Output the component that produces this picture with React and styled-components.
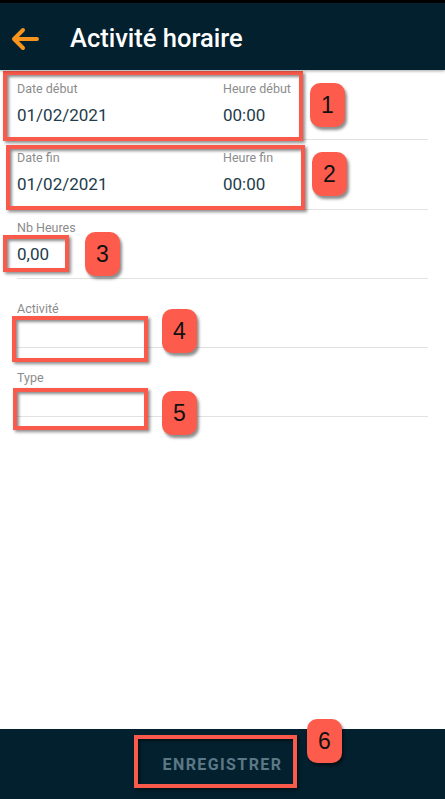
import React from "react";
import styled, { createGlobalStyle } from "styled-components";

const Global = createGlobalStyle`
  html, body { margin: 0; padding: 0; height: 100%; }
  body { font-family: Roboto, "Liberation Sans", sans-serif; background: #fff; }
  #root { height: 100%; }
`;

const Page = styled.div`
  position: relative;
  height: 100vh;
  display: flex;
  flex-direction: column;
  overflow: hidden;
`;

const Header = styled.header`
  height: 67px;
  border-top: 3px solid #000;
  background: #03202e;
  display: flex;
  align-items: center;
  box-shadow: 0 1px 3px rgba(0, 0, 0, 0.35);
  z-index: 1;
`;

const Back = styled.button`
  border: 0;
  background: none;
  padding: 0;
  margin: 4px 0 0 10px;
  width: 30px;
  height: 24px;
  display: flex;
`;

const Title = styled.h1`
  margin: 2px 0 0 30px;
  color: #fff;
  font-size: 25.5px;
  font-weight: 500;
`;

const Form = styled.main`
  flex: 1;
  padding: 0 17px;
`;

const Row = styled.div`
  height: ${p => (p.$tall ? "69px" : "68px")};
  border-bottom: 1px solid #e2e2e2;
  display: flex;
`;

const Field = styled.div`
  display: flex;
  flex-direction: column;
  width: ${p => p.$w || "auto"};
  padding-top: ${p => p.$top || 12}px;
`;

const Label = styled.span`
  font-size: 12.5px;
  line-height: 14px;
  color: #8c8c8c;
`;

const Value = styled.span`
  margin-top: 9px;
  font-size: 17px;
  line-height: 20px;
  color: #233c4a;
`;

const Footer = styled.footer`
  height: 70px;
  background: #03202e;
  display: flex;
  align-items: center;
  justify-content: center;
`;

const Save = styled.button`
  border: 0;
  background: none;
  margin: 0;
  color: #5b7886;
  font-family: Roboto, "Liberation Sans", sans-serif;
  font-size: 16px;
  font-weight: 700;
  letter-spacing: 1.4px;
`;

const Mark = styled.div`
  position: absolute;
  box-sizing: border-box;
  border: 4px solid #f95a4b;
  box-shadow: 2px 2px 3px rgba(0, 0, 0, 0.45), inset 2px 2px 3px rgba(0, 0, 0, 0.45);
  pointer-events: none;
`;

const Badge = styled.div`
  position: absolute;
  width: 35px;
  height: 44px;
  border-radius: 10px;
  background: #fd5c4d;
  box-shadow: 2px 3px 3px rgba(0, 0, 0, 0.45);
  display: flex;
  align-items: center;
  justify-content: center;
  font-family: "Liberation Sans", Arial, sans-serif;
  font-size: 23px;
  color: #111;
`;

const marks = [
  { b: [3, 71, 300, 70], n: [310, 83] },
  { b: [6, 145, 299, 65], n: [312, 152] },
  { b: [3, 235, 66, 37], n: [85, 232] },
  { b: [12, 316, 136, 46], n: [162, 309] },
  { b: [13, 388, 135, 42], n: [162, 391] },
  { b: [134, 735, 163, 53], n: [307, 719] },
];

export default function App() {
  return (
    <Page>
      <Global />
      <Header>
        <Back aria-label="Retour">
          <svg width="30" height="24" viewBox="0 0 30 24">
            <path
              d="M27 12H4M13 3L4 12l9 9"
              fill="none"
              stroke="#f7941d"
              strokeWidth="4"
              strokeLinecap="round"
              strokeLinejoin="round"
            />
          </svg>
        </Back>
        <Title>Activité horaire</Title>
      </Header>
      <Form>
        <Row $tall>
          <Field $w="206px">
            <Label>Date début</Label>
            <Value>01/02/2021</Value>
          </Field>
          <Field>
            <Label>Heure début</Label>
            <Value>00:00</Value>
          </Field>
        </Row>
        <Row $tall>
          <Field $w="206px" $top={11}>
            <Label>Date fin</Label>
            <Value>01/02/2021</Value>
          </Field>
          <Field $top={11}>
            <Label>Heure fin</Label>
            <Value>00:00</Value>
          </Field>
        </Row>
        <Row>
          <Field $top={11}>
            <Label>Nb Heures</Label>
            <Value>0,00</Value>
          </Field>
        </Row>
        <Row>
          <Field $top={23}>
            <Label>Activité</Label>
          </Field>
        </Row>
        <Row>
          <Field $top={23}>
            <Label>Type</Label>
          </Field>
        </Row>
      </Form>
      <Footer>
        <Save>ENREGISTRER</Save>
      </Footer>
      {marks.map((m, i) => (
        <React.Fragment key={i}>
          <Mark style={{ left: m.b[0], top: m.b[1], width: m.b[2], height: m.b[3] }} />
          <Badge style={{ left: m.n[0], top: m.n[1] }}>{i + 1}</Badge>
        </React.Fragment>
      ))}
    </Page>
  );
}
